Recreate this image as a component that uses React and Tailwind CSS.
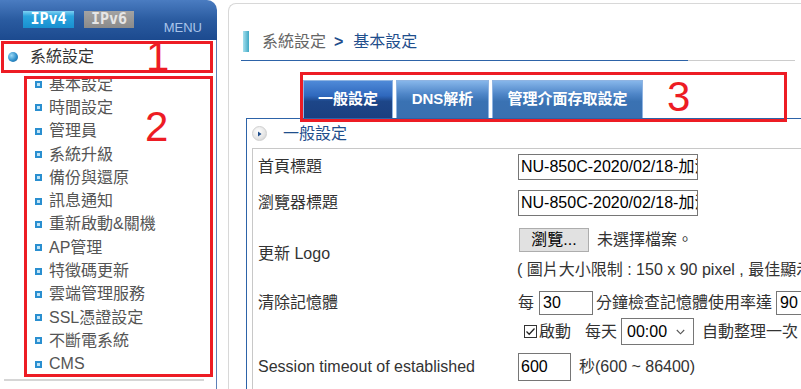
import React from "react";

const menuItems = [
  "基本設定",
  "時間設定",
  "管理員",
  "系統升級",
  "備份與還原",
  "訊息通知",
  "重新啟動&關機",
  "AP管理",
  "特徵碼更新",
  "雲端管理服務",
  "SSL憑證設定",
  "不斷電系統",
  "CMS",
];

const tabs = [
  { label: "一般設定", w: "w-[90px]", active: true },
  { label: "DNS解析", w: "w-[93px]" },
  { label: "管理介面存取設定", w: "w-[151px]" },
];

const Sidebar = () => (
  <aside className="w-[217px] shrink-0 flex flex-col">
    {/* header */}
    <div className="h-[40px] rounded-tr-[10px] bg-[linear-gradient(#4a7cc1,#2a5ba0_50%,#1c4a8f)] flex items-start pl-[23px] pt-[11px]">
      <span className="w-[51px] h-[17px] bg-[linear-gradient(#7fd2f4_0%,#2aa4de_30%,#1890d0_100%)] text-white font-bold text-[15px] leading-[17px] text-center font-['DejaVu_Sans_Mono',monospace]">
        IPv4
      </span>
      <span className="ml-[10px] w-[50px] h-[17px] bg-[linear-gradient(#a3a3a3,#8a8a8a)] text-[#e6e6e6] font-bold text-[15px] leading-[17px] text-center font-['DejaVu_Sans_Mono',monospace]">
        IPv6
      </span>
      <span className="ml-auto mr-[15px] mt-[10px] text-[13px] leading-[13px] text-[#a9c4ea]">
        MENU
      </span>
    </div>

    <div className="flex-1 border-r border-[#5d80b8] flex flex-col">
      <div className="h-[33px] flex items-center pl-[8px]">
        <span className="w-[10px] h-[10px] rounded-full bg-[radial-gradient(circle_at_35%_35%,#9ad8f5,#2f8fcb_55%,#1a5f93)]" />
        <span className="ml-[12px] text-[16px] text-[#333]">系統設定</span>
      </div>

      {menuItems.map((item) => (
        <div key={item} className="h-[23.3px] flex items-center pl-[35px]">
          <span className="w-[7px] h-[7px] bg-[#2a8fd0] flex items-center justify-center">
            <span className="w-[3px] h-[3px] bg-[#bfe3f7]" />
          </span>
          <span className="ml-[7px] text-[16px] leading-none text-[#555]">{item}</span>
        </div>
      ))}

      <div className="mt-[3px] ml-[4px] w-[200px] border-t-2 border-[#d6d6d6]" />
    </div>
  </aside>
);

const Label = ({ children }) => (
  <div className="w-[265px] shrink-0 pl-[5px] text-[16px] text-[#333] whitespace-nowrap">
    {children}
  </div>
);

const Box = ({ className, children }) => (
  <div
    className={`border border-[#767676] bg-white text-black text-[16px] overflow-hidden whitespace-nowrap flex items-center ${className}`}
  >
    {children}
  </div>
);

const App = () => {
  return (
    <div className="relative w-[801px] h-[389px] overflow-hidden bg-white flex font-['Liberation_Sans','Noto_Sans_CJK_TC',sans-serif]">
      <Sidebar />

      <main className="ml-[11px] mt-[3px] flex-1 min-w-0 overflow-hidden rounded-tl-[8px] border-l border-t border-[#d8d8d8] pl-[12px]">
        {/* title */}
        <div className="mt-[27px] h-[21px] flex items-center">
          <span className="ml-[2px] w-[6px] h-[21px] bg-[linear-gradient(to_right,#a6e0ee,#3fa8c4)]" />
          <span className="ml-[13px] text-[16px] text-[#666]">系統設定</span>
          <span className="ml-[8px] text-[16px] font-bold text-[#1f4e8c]">&gt;</span>
          <span className="ml-[10px] text-[16px] text-[#1f4e8c]">基本設定</span>
        </div>
        <div className="mt-[8px] flex">
          <div className="w-[447px] h-[1px] bg-[#2d63a8]" />
          <div className="w-[107px] h-[1px] bg-[#cccccc]" />
        </div>

        <div className="ml-[5px] mt-[19px] w-[700px]">
          {/* tabs */}
          <div className="flex gap-[3px] pl-[57px] h-[38px]">
            {tabs.map((t) => (
              <div
                key={t.label}
                className={`${t.w} h-[38px] border border-[#8fb4e2] border-b-0 flex items-center justify-center text-white font-bold text-[15px] ${
                  t.active
                    ? "bg-[linear-gradient(#4f8ad8,#2f68bd_40%,#1d4688_55%,#1a3f80)]"
                    : "bg-[linear-gradient(#86b6ea,#4f86c8_35%,#3a72b3_55%,#3a70b0)]"
                }`}
              >
                {t.label}
              </div>
            ))}
          </div>

          <div className="border-t border-l border-[#2d63a8]">
            <div className="h-[29px] flex items-center pl-[5px]">
              <span className="w-[15px] h-[15px] rounded-full border border-[#cfcfcf] bg-[radial-gradient(circle_at_40%_35%,#ffffff,#e4e4e4_60%,#c8c8c8)] flex items-center justify-center">
                <svg width="5" height="6" viewBox="0 0 5 6">
                  <path d="M1 0.5 L4.5 3 L1 5.5 Z" fill="#1f4e8c" />
                </svg>
              </span>
              <span className="ml-[16px] text-[16px] text-[#1f4e8c]">一般設定</span>
            </div>

            <div className="ml-[5px] border-t border-l border-[#c8c8c8] pb-[20px]">
              {/* 首頁標題 */}
              <div className="mt-[5px] h-[26px] flex items-center">
                <Label>首頁標題</Label>
                <Box className="w-[180px] h-[26px] pl-[2px]">NU-850C-2020/02/18-加油站</Box>
              </div>

              {/* 瀏覽器標題 */}
              <div className="mt-[10px] h-[26px] flex items-center">
                <Label>瀏覽器標題</Label>
                <Box className="w-[180px] h-[26px] pl-[2px]">NU-850C-2020/02/18-加油站</Box>
              </div>

              {/* 更新 Logo */}
              <div className="mt-[12px] flex items-center">
                <Label>更新 Logo</Label>
                <div className="flex flex-col">
                  <div className="flex items-center h-[24px]">
                    <div className="ml-[1px] w-[70px] h-[24px] bg-[#e1e1e1] border border-[#adadad] flex items-center justify-center text-[16px] text-black">
                      瀏覽...
                    </div>
                    <span className="ml-[8px] text-[16px] text-[#333]">未選擇檔案。</span>
                  </div>
                  <div className="mt-[8px] h-[20px] flex items-center -ml-[1px] text-[16px] text-[#333] whitespace-nowrap">
                    ( 圖片大小限制 : 150 x 90 pixel , 最佳顯示比例
                  </div>
                </div>
              </div>

              {/* 清除記憶體 */}
              <div className="mt-[11px] flex items-start">
                <div className="h-[24px] flex items-center">
                  <Label>清除記憶體</Label>
                </div>
                <div className="flex flex-col">
                  <div className="h-[24px] flex items-center text-[16px] text-[#333] whitespace-nowrap">
                    <span>每</span>
                    <Box className="ml-[5px] w-[54px] h-[24px] pl-[3px]">30</Box>
                    <span className="ml-[3px]">分鐘檢查記憶體使用率達</span>
                    <Box className="ml-[4px] w-[40px] h-[24px] pl-[3px]">90</Box>
                  </div>
                  <div className="mt-[3px] h-[27px] flex items-center text-[16px] text-[#333] whitespace-nowrap">
                    <span className="ml-[6px] w-[13px] h-[13px] border border-[#333] bg-white flex items-center justify-center">
                      <svg width="11" height="11" viewBox="0 0 11 11">
                        <path d="M1.5 5.5 L4.2 8.2 L9.5 2.5" fill="none" stroke="#222" strokeWidth="1.3" />
                      </svg>
                    </span>
                    <span className="ml-[2px]">啟動</span>
                    <span className="ml-[14px]">每天</span>
                    <div className="ml-[4px] w-[73px] h-[27px] border border-[#767676] flex items-center pl-[5px] text-black">
                      <span>00:00</span>
                      <svg className="ml-auto mr-[8px]" width="9" height="6" viewBox="0 0 9 6">
                        <path d="M0.8 1 L4.5 4.8 L8.2 1" fill="none" stroke="#555" strokeWidth="1.1" />
                      </svg>
                    </div>
                    <span className="ml-[8px]">自動整理一次</span>
                  </div>
                </div>
              </div>

              {/* Session timeout */}
              <div className="mt-[8px] h-[28px] flex items-center">
                <Label>Session timeout of established</Label>
                <Box className="w-[53px] h-[28px] pl-[2px]">600</Box>
                <span className="ml-[8px] text-[16px] text-[#333] whitespace-nowrap">秒(600 ~ 86400)</span>
              </div>
            </div>
          </div>
        </div>
      </main>

      {/* red annotation boxes */}
      <div className="absolute left-[1px] top-[41px] w-[212px] h-[32px] border-[3px] border-[#ed1c24]" />
      <div className="absolute left-[24px] top-[76px] w-[189px] h-[301px] border-[3px] border-[#ed1c24]" />
      <div className="absolute left-[300px] top-[72px] w-[487px] h-[50px] border-[3px] border-[#ed1c24]" />
      <span className="absolute left-[146px] top-[36px] text-[42px] leading-none text-[#ed1c24]">1</span>
      <span className="absolute left-[145px] top-[106px] text-[42px] leading-none text-[#ed1c24]">2</span>
      <span className="absolute left-[667px] top-[76px] text-[42px] leading-none text-[#ed1c24]">3</span>
    </div>
  );
};

export default App;
